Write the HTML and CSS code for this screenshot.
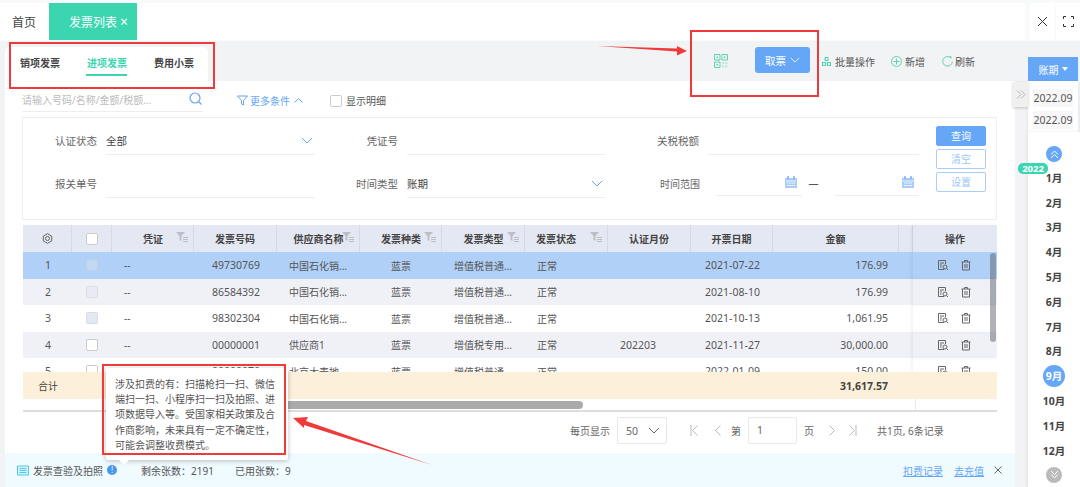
FILE: index.html
```html
<!DOCTYPE html>
<html lang="en">
<head>
    <meta charset="UTF-8">
    <title>发票列表</title>
    <link rel="stylesheet" href="styles.css">
</head>
<body>
<svg class="defs" width="0" height="0">
    <symbol id="i-filter" viewBox="0 0 12 10"><path d="M0 0h9L5.500 4v5L3.500 8V4z" fill="#bdbfc5"/><path d="M7 5.500h5M7 7.500h5M7 9.500h5" stroke="#bdbfc5" fill="none"/></symbol>
    <symbol id="i-doc" viewBox="0 0 12 12"><path d="M7 10.500H1.500v-9h7V5M3 4h4M3 6h2M3 8h1.500" fill="none" stroke="#666"/><circle cx="8" cy="8" r="2" fill="none" stroke="#666"/><path d="M9.500 9.500l1.500 1.500" stroke="#666"/></symbol>
    <symbol id="i-trash" viewBox="0 0 12 12"><path d="M1.500 3h9M4.500 3V1.500h3V3M2.500 3v8h7V3M5 5v4M7 5v4" fill="none" stroke="#666"/></symbol>
    <symbol id="i-cal" viewBox="0 0 12 12"><path d="M0 2h12v10H0z" fill="#a9cdf8"/><path d="M3 0v3M9 0v3" stroke="#66a6f7" stroke-width="1.300"/><path d="M1 5h10M2 7h8M2 9.500h8" stroke="#fff" stroke-dasharray="1.500 .7"/></symbol>
    <symbol id="i-down" viewBox="0 0 12 7"><path d="M1 1l5 5 5-5" fill="none" stroke="currentColor"/></symbol>
</svg>

<div class="topbar">
    <div class="tabs">
        <span class="tab">首页</span>
        <span class="tab tab-on">发票列表<i>×</i></span>
    </div>
    <div class="win-btns">
        <span class="win-btn"><svg width="11" height="11" viewBox="0 0 11 11"><path d="M1 1l9 9M10 1l-9 9" stroke="#333" fill="none"/></svg></span>
        <span class="win-btn"><svg width="11" height="11" viewBox="0 0 11 11"><path d="M.5 3V.5H3M8 .5h2.500V3M10.500 8v2.500H8M3 10.500H.5V8" stroke="#333" fill="none"/></svg></span>
    </div>
</div>

<div class="content">
    <div class="main">
        <div class="toolbar">
            <div class="kind-tabs">
                <span class="kind">销项发票</span>
                <span class="kind kind-on">进项发票</span>
                <span class="kind">费用小票</span>
            </div>
            <div class="actions">
                <svg class="qr" width="14" height="14" viewBox="0 0 14 14"><path d="M.5.500h5.500v5.500H.5zM8 .5h5.500v5.500H8zM.5 8h5.500v5.500H.5z" fill="none" stroke="#5fd3ae"/><path d="M2.500 2.500h1.500V4H2.500zM10 2.500h1.500V4H10zM2.500 10h1.500v1.500H2.500z" fill="#5fd3ae"/><path d="M8 8h2v2H8zM11 8h2.500v2H11zM8 11h2v2.500H8zM11 11h2.500v2.500H11z" fill="#bfe9da"/></svg>
                <span class="btn-take">取票<svg width="10" height="6" viewBox="0 0 12 7"><use href="#i-down"/></svg></span>
                <span class="act act-batch"><svg width="9" height="9" viewBox="0 0 9 9"><path d="M3 .5h3v3H3zM.5 5.500h3v3h-3zM5.500 5.500h3v3h-3z" fill="none" stroke="#3ecfa9"/></svg>批量操作</span>
                <span class="act act-add"><svg width="11" height="11" viewBox="0 0 11 11"><circle cx="5.500" cy="5.500" r="5" fill="none" stroke="#5fd3ae"/><path d="M5.500 2.500v6M2.500 5.500h6" stroke="#5fd3ae"/></svg>新增</span>
                <span class="act act-fresh"><svg width="11" height="11" viewBox="0 0 11 11"><path d="M8.500 1.600A4.800 4.800 0 1 0 10.300 5.500" fill="none" stroke="#5fd3ae"/><path d="M7 .5l2.500 2.500-.3-3z" fill="#5fd3ae"/></svg>刷新</span>
            </div>
        </div>

        <div class="panel">
            <div class="search-row">
                <div class="search">
                    <span>请输入号码/名称/金额/税额...</span>
                    <svg width="14" height="14" viewBox="0 0 14 14"><circle cx="6" cy="6" r="5" fill="none" stroke="#66a6f7" stroke-width="1.200"/><path d="M9.500 9.500l3 3" stroke="#66a6f7" stroke-width="1.200"/></svg>
                </div>
                <span class="more"><svg width="11" height="11" viewBox="0 0 11 11"><path d="M.5 1h10L6.500 5.500V10l-2-1V5.500z" fill="none" stroke="#66a6f7"/></svg>更多条件<svg class="more-up" width="9" height="5" viewBox="0 0 9 5"><path d="M.5 4.500l4-4 4 4" fill="none" stroke="#66a6f7"/></svg></span>
                <span class="detail"><i class="check"></i>显示明细</span>
            </div>

            <div class="filter">
                <div class="fields">
                    <label>认证状态</label>
                    <div class="field">全部<svg class="chev" width="12" height="7" viewBox="0 0 12 7"><use href="#i-down"/></svg></div>
                    <label>凭证号</label>
                    <div class="field"></div>
                    <label>关税税额</label>
                    <div class="field"></div>
                    <label>报关单号</label>
                    <div class="field"></div>
                    <label>时间类型</label>
                    <div class="field">账期<svg class="chev" width="12" height="7" viewBox="0 0 12 7"><use href="#i-down"/></svg></div>
                    <label class="label-small">时间范围</label>
                    <div class="dates">
                        <div class="date"><svg width="12" height="12"><use href="#i-cal"/></svg></div>
                        <span class="dash">—</span>
                        <div class="date"><svg width="12" height="12"><use href="#i-cal"/></svg></div>
                    </div>
                </div>
                <div class="filter-btns">
                    <span class="fbtn fbtn-on">查询</span>
                    <span class="fbtn">清空</span>
                    <span class="fbtn">设置</span>
                </div>
            </div>

            <div class="table">
                <div class="row head">
                    <span><svg width="11" height="11" viewBox="0 0 11 11"><path d="M5.500.7l4.200 2.400v4.800L5.500 10.300 1.300 7.900V3.100z" fill="none" stroke="#666"/><circle cx="5.500" cy="5.500" r="2" fill="none" stroke="#666"/></svg></span>
                    <span><i class="check"></i></span>
                    <span class="has-f">凭证<svg class="f" width="12" height="10"><use href="#i-filter"/></svg></span>
                    <span>发票号码</span>
                    <span class="has-f">供应商名称<svg class="f" width="12" height="10"><use href="#i-filter"/></svg></span>
                    <span class="has-f">发票种类<svg class="f" width="12" height="10"><use href="#i-filter"/></svg></span>
                    <span class="has-f">发票类型<svg class="f" width="12" height="10"><use href="#i-filter"/></svg></span>
                    <span class="has-f st">发票状态<svg class="f" width="12" height="10"><use href="#i-filter"/></svg></span>
                    <span>认证月份</span>
                    <span>开票日期</span>
                    <span>金额</span>
                    <span></span>
                    <span class="op">操作</span>
                </div>
                <div class="tbody">
                    <div class="row sel">
                        <span class="num">1</span><span><i class="check c1"></i></span><span class="l">--</span><span class="num">49730769</span><span class="l">中国石化销...</span><span>蓝票</span><span class="l">增值税普通...</span><span class="l">正常</span><span class="num"></span><span class="num">2021-07-22</span><span class="r num">176.99</span><span></span>
                        <span class="op"><svg width="12" height="12"><use href="#i-doc"/></svg><svg width="12" height="12"><use href="#i-trash"/></svg></span>
                    </div>
                    <div class="row alt">
                        <span class="num">2</span><span><i class="check c2"></i></span><span class="l">--</span><span class="num">86584392</span><span class="l">中国石化销...</span><span>蓝票</span><span class="l">增值税普通...</span><span class="l">正常</span><span class="num"></span><span class="num">2021-08-10</span><span class="r num">176.99</span><span></span>
                        <span class="op"><svg width="12" height="12"><use href="#i-doc"/></svg><svg width="12" height="12"><use href="#i-trash"/></svg></span>
                    </div>
                    <div class="row">
                        <span class="num">3</span><span><i class="check c3"></i></span><span class="l">--</span><span class="num">98302304</span><span class="l">中国石化销...</span><span>蓝票</span><span class="l">增值税普通...</span><span class="l">正常</span><span class="num"></span><span class="num">2021-10-13</span><span class="r num">1,061.95</span><span></span>
                        <span class="op"><svg width="12" height="12"><use href="#i-doc"/></svg><svg width="12" height="12"><use href="#i-trash"/></svg></span>
                    </div>
                    <div class="row alt">
                        <span class="num">4</span><span><i class="check"></i></span><span class="l">--</span><span class="num">00000001</span><span class="l">供应商1</span><span>蓝票</span><span class="l">增值税专用...</span><span class="l">正常</span><span class="l num">202203</span><span class="num">2021-11-27</span><span class="r num">30,000.00</span><span></span>
                        <span class="op"><svg width="12" height="12"><use href="#i-doc"/></svg><svg width="12" height="12"><use href="#i-trash"/></svg></span>
                    </div>
                    <div class="row">
                        <span class="num">5</span><span><i class="check"></i></span><span class="l">--</span><span class="num">00000070</span><span class="l">北京大麦地</span><span>蓝票</span><span class="l">增值税普通...</span><span class="l">正常</span><span class="num"></span><span class="num">2022-01-09</span><span class="r num">150.00</span><span></span>
                        <span class="op"><svg width="12" height="12"><use href="#i-doc"/></svg><svg width="12" height="12"><use href="#i-trash"/></svg></span>
                    </div>
                    <div class="vbar"></div>
                </div>
                <div class="row total">
                    <span class="total-name">合计</span>
                    <span class="total-sum">31,617.57</span>
                </div>
                <div class="hscroll"><div class="hbar"></div></div>
            </div>

            <div class="pager">
                <span>每页显示</span>
                <span class="page-size">50<svg width="12" height="7" viewBox="0 0 12 7"><use href="#i-down"/></svg></span>
                <div class="page-nav">
                    <svg width="8" height="11" viewBox="0 0 8 11"><path d="M1 0v11M7.500.5l-5 5 5 5" fill="none" stroke="#bbb"/></svg>
                    <svg width="7" height="11" viewBox="0 0 7 11"><path d="M6.500.5l-5 5 5 5" fill="none" stroke="#bbb"/></svg>
                    <span>第</span>
                    <span class="page-no">1</span>
                    <span>页</span>
                    <svg width="7" height="11" viewBox="0 0 7 11"><path d="M.5.500l5 5-5 5" fill="none" stroke="#bbb"/></svg>
                    <svg width="8" height="11" viewBox="0 0 8 11"><path d="M7 0v11M.5.500l5 5-5 5" fill="none" stroke="#bbb"/></svg>
                </div>
                <span class="page-total">共1页, 6条记录</span>
            </div>

            <div class="notice">
                <svg class="scan" width="12" height="11" viewBox="0 0 12 11"><path d="M.5 1h11v9H.5z" fill="#d6f2fb" stroke="#4fc8ea"/><path d="M2.500 3.500h7M2.500 5.500h7M2.500 7.500h7" stroke="#4fc8ea"/></svg>
                <span>发票查验及拍照</span>
                <i class="info">!</i>
                <span class="left-count">剩余张数：2191</span>
                <span class="used-count">已用张数：9</span>
                <a class="link link-a" href="#">扣费记录</a>
                <a class="link" href="#">去充值</a>
                <svg class="notice-x" width="8" height="8" viewBox="0 0 8 8"><path d="M.5.500l7 7M7.500.5l-7 7" stroke="#666" fill="none"/></svg>
            </div>
        </div>
    </div>

    <div class="side">
        <div class="period">账期<b></b></div>
        <div class="period-list">
            <span>2022.09</span>
            <span>2022.09</span>
        </div>
        <div class="months">
            <span class="round round-up"><svg width="9" height="9" viewBox="0 0 9 9"><path d="M1 4.500l3.500-3.500 3.500 3.500M1 8l3.500-3.500 3.500 3.500" fill="none" stroke="#fff"/></svg></span>
            <span class="month">1月</span>
            <span class="month">2月</span>
            <span class="month">3月</span>
            <span class="month">4月</span>
            <span class="month">5月</span>
            <span class="month">6月</span>
            <span class="month">7月</span>
            <span class="month">8月</span>
            <span class="month month-on"><em>9月</em></span>
            <span class="month">10月</span>
            <span class="month">11月</span>
            <span class="month">12月</span>
            <span class="round round-down"><svg width="9" height="9" viewBox="0 0 9 9"><path d="M1 1l3.500 3.500L8 1M1 4.500L4.500 8 8 4.500" fill="none" stroke="#fff"/></svg></span>
        </div>
    </div>
</div>

<!-- things lying over the page -->
<span class="handle"><svg width="10" height="9" viewBox="0 0 10 9"><path d="M1 .5l4 4-4 4M5 .5l4 4-4 4" fill="none" stroke="#b5b5b5"/></svg></span>
<span class="year">2022</span>

<div class="tip">
    涉及扣费的有：扫描枪扫一扫、微信<br>
    端扫一扫、小程序扫一扫及拍照、进<br>
    项数据导入等。受国家相关政策及合<br>
    作商影响，未来具有一定不确定性，<br>
    可能会调整收费模式。
</div>

<svg class="marks" width="1080" height="487" viewBox="0 0 1080 487">
    <g fill="none" stroke="#f03a3a" stroke-width="2">
        <rect x="10" y="43" width="204" height="45"/>
        <rect x="691" y="31" width="127" height="65"/>
        <rect x="103" y="365" width="182" height="89"/>
    </g>
    <g fill="#f03a3a">
        <polygon points="597,46 677,48.500 677,46 687,51 677,55.500 677,51.500"/>
        <polygon points="293,418 308,417 306,421 432,465 304,425 304,428"/>
    </g>
</svg>
</body>
</html>
```

FILE: styles.css
```css
*{ margin: 0; padding: 0; box-sizing: border-box; }
i,em{ font-style: normal; }
a{ color: inherit; }
body{
    position: relative;
    width: 1080px;
    height: 487px;
    overflow: hidden;
    background: #f2f3f5;
    font-family: "Noto Sans", "Noto Sans CJK SC", sans-serif;
    font-size: 10px;
    color: #555;
}
.defs{ position: absolute; }

/* top tabs */
.topbar{
    display: flex;
    justify-content: space-between;
    height: 41px;
    padding-top: 3px;
    background: #f9fafc;
}
.tabs{
    display: flex;
    flex: 1;
    height: 37px;
    background: #fff;
}
.tab{
    display: flex;
    align-items: center;
    padding-left: 12px;
    width: 49px;
    font-size: 12px;
    color: #444;
}
.tab-on{
    width: 88px;
    padding-left: 20px;
    background: #3bd6b0;
    color: #fff;
}
.tab-on i{ margin-left: 3px; font-size: 14px; }
.win-btns{ display: flex; height: 37px; margin-left: 3px; }
.win-btn{
    display: flex;
    align-items: center;
    justify-content: center;
    width: 24px;
    margin-left: 2px;
    background: #fff;
}

.content{ display: flex; height: 446px; }
.main{ display: flex; flex-direction: column; width: 1010px; margin-left: 5px; }

/* toolbar */
.toolbar{
    display: flex;
    justify-content: space-between;
    height: 40px;
    padding-right: 40px;
}
.kind-tabs{
    display: flex;
    width: 203px;
    height: 34px;
    margin-top: 6px;
    padding-left: 15px;
    background: #fff;
    border-radius: 5px 5px 0 0;
}
.kind{
    position: relative;
    flex: none;
    width: 67px;
    line-height: 32px;
    font-weight: bold;
    color: #444;
}
.kind-on{ color: #3bd6b0; }
.kind-on:after{
    content: "";
    position: absolute;
    left: -1px;
    top: 27px;
    width: 41px;
    height: 2px;
    background: #3bd6b0;
}
.actions{ display: flex; align-items: center; }
.btn-take{
    display: flex;
    align-items: center;
    justify-content: center;
    gap: 4px;
    width: 55px;
    height: 26px;
    margin: 0 12px 2px 27px;
    background: #66a6f7;
    border-radius: 3px;
    font-size: 10.500px;
    color: #fff;
}
.act{ display: flex; align-items: center; gap: 4px; }
.act-batch{ margin-right: 16px; }
.act-add{ margin-right: 17px; gap: 3px; }
.act-fresh{ gap: 2px; }

/* panel */
.panel{
    display: flex;
    flex-direction: column;
    flex: 1;
    padding: 9px 18px 0 17px;
    background: #fff;
}
.search-row{ display: flex; align-items: center; height: 21px; }
.search{
    display: flex;
    justify-content: space-between;
    align-items: center;
    width: 181px;
    height: 22px;
    padding-bottom: 2px;
    border-bottom: 1px solid #eee;
    color: #bbb;
}
.more{
    display: flex;
    align-items: center;
    gap: 2px;
    margin-left: 34px;
    color: #66a6f7;
}
.more-up{ margin-left: 2px; }
.detail{ display: flex; align-items: center; gap: 4px; margin-left: 27px; }
.check{
    display: block;
    width: 12px;
    height: 12px;
    border: 1px solid #ccc;
    border-radius: 2px;
    background: #fff;
}
.c1{ background: #c4d8f4; border-color: #bcd0ea; }
.c2{ background: #e8ebf3; border-color: #dcdfe8; }
.c3{ background: #e4e8f3; border-color: #d8dce8; }

/* filter box */
.filter{
    display: flex;
    height: 103px;
    margin-top: 6px;
    border: 1px solid #eee;
}
.fields{
    display: grid;
    grid-template-columns: 83px 209px 92px 198px 103px 211px;
    grid-template-rows: 26px 26px;
    row-gap: 17px;
    padding-top: 11px;
}
.fields label{
    padding-right: 9px;
    font-size: 10.500px;
    line-height: 25px;
    text-align: right;
    color: #666;
}
.fields .label-small{ font-size: 10px; padding-right: 8px; }
.field{
    display: flex;
    justify-content: space-between;
    line-height: 25px;
    font-size: 10.500px;
    color: #444;
    border-bottom: 1px solid #eee;
}
.chev{ margin: 8px 2px 0 0; color: #66a6f7; }
.dates{ display: flex; padding-left: 9px; }
.date{
    display: flex;
    justify-content: flex-end;
    flex: 1;
    height: 24px;
    padding: 4px 5px 0 0;
    border-bottom: 1px solid #eee;
}
.dash{ width: 33px; padding-left: 7px; line-height: 22px; }
.filter-btns{
    display: flex;
    flex-direction: column;
    gap: 3px;
    width: 50px;
    margin: 8px 0 0 17px;
}
.fbtn{
    height: 20px;
    border: 1px solid #a9cdf8;
    border-radius: 2px;
    line-height: 18px;
    text-align: center;
    color: #a0c6f8;
}
.fbtn-on{ background: #66a6f7; border-color: #66a6f7; color: #fff; }

/* table */
.table{ margin: 5px 0 0 1px; border-bottom: 2px solid #ddd; }
.row{
    display: grid;
    grid-template-columns: 49px 40px 82px 83px 83px 82px 83px 83px 83px 82px 126px 14px 84px;
    height: 26.500px;
    background: #fff;
}
.row > span{
    display: flex;
    align-items: center;
    justify-content: center;
    position: relative;
    min-width: 0;
    white-space: nowrap;
    overflow: hidden;
}
.head{ height: 27px; background: #e4e8f3; font-weight: bold; color: #444; }
.head > span{ border-right: 1px solid #d5d9e4; }
.head .has-f{ padding-left: 1px; }
.has-f .f{ position: absolute; right: 5px; top: 7px; }
.head .st{ justify-content: flex-start; padding-left: 11px; }
.tbody{ position: relative; height: 120px; overflow: hidden; }
.sel{ background: #b0d0f8; }
.alt{ background: #f0f1f7; }
.row .l{ justify-content: flex-start; padding-left: 12px; }
.row .r{ justify-content: flex-end; padding-right: 11px; }
.num{ font-size: 10.500px; padding-left: 1px; }
.row .op{ gap: 11px; padding-right: 2px; box-shadow: -2px 0 3px rgba(0,0,0,.05); }
.head .op{ border: 0; padding: 0; }
.vbar{
    position: absolute;
    right: 1px;
    top: 1px;
    width: 6px;
    height: 89px;
    border-radius: 3px;
    background: rgba(80,85,95,.45);
}
.total{
    display: flex;
    align-items: center;
    justify-content: space-between;
    height: 27px;
    padding: 0 109px 0 15px;
    background: #fcf0da;
    color: #444;
}
.total-sum{ font-size: 10.500px; font-weight: bold; }
.hscroll{ position: relative; height: 11px; padding-top: 2px; background: #fff; }
.hscroll:after{
    content: "";
    position: absolute;
    left: 892px;
    top: 0;
    width: 1px;
    height: 11px;
    background: #e8e8e8;
}
.hbar{
    width: 473px;
    height: 8px;
    margin-left: 87px;
    border-radius: 4px;
    background: #aaa;
}

/* pager */
.pager{
    display: flex;
    align-items: center;
    height: 37px;
    padding-left: 548px;
    color: #666;
}
.page-size{
    display: flex;
    align-items: center;
    justify-content: space-between;
    width: 50px;
    height: 27px;
    margin-left: 7px;
    padding: 0 6px 0 8px;
    border: 1px solid #e8e8e8;
    border-radius: 2px;
    font-size: 10.500px;
}
.page-nav{ display: flex; align-items: center; margin-left: 23px; }
.page-nav span:nth-child(3){ margin: 0 7px 0 10px; }
.page-nav svg:nth-child(2){ margin-left: 16px; }
.page-nav span:nth-child(5){ margin: 0 15px 0 7px; }
.page-nav svg:last-child{ margin-left: 13px; }
.page-no{
    width: 49px;
    height: 27px;
    padding-left: 8px;
    border: 1px solid #e8e8e8;
    border-radius: 2px;
    font-size: 10.500px;
    line-height: 25px;
}
.page-total{ margin-left: 20px; }

/* bottom notice */
.notice{
    display: flex;
    align-items: center;
    height: 34px;
    margin: 4px -18px 0 -17px;
    padding: 0 13px 0 12px;
    background: #f0fbff;
}
.scan{ margin-right: 4px; }
.info{
    width: 10px;
    height: 10px;
    margin-left: 4px;
    border-radius: 50%;
    background: #4a96f0;
    font-size: 8px;
    line-height: 10px;
    text-align: center;
    color: #fff;
}
.left-count{ margin-left: 24px; }
.used-count{ margin-left: 21px; }
.link{ color: #66a6f7; text-decoration: underline; }
.link-a{ margin: 0 11px 0 auto; }
.notice-x{ margin-left: 10px; }

/* right column */
.side{ display: flex; flex-direction: column; flex: 1; padding: 16px 0 0 13px; }
.period{
    display: flex;
    align-items: center;
    justify-content: center;
    gap: 3px;
    width: 50px;
    height: 24px;
    background: #66a6f7;
    font-size: 10px;
    color: #fff;
}
.period b{
    border-top: 4px solid #fff;
    border-left: 3px solid transparent;
    border-right: 3px solid transparent;
}
.period-list{
    display: flex;
    flex-direction: column;
    gap: 4px;
    width: 50px;
    height: 51px;
    padding: 8px 5px 0;
    background: #fff;
    box-shadow: 0 1px 3px rgba(0,0,0,.1);
}
.period-list span{
    height: 18px;
    background: #f7f7f7;
    font-size: 10.500px;
    line-height: 18px;
    text-align: center;
    color: #555;
}
.months{
    display: flex;
    flex-direction: column;
    align-items: center;
    flex: 1;
    padding-top: 14px;
    background: #fff;
    box-shadow: -1px 0 3px rgba(0,0,0,.08);
}
.round{
    display: flex;
    align-items: center;
    justify-content: center;
    flex: none;
    width: 16px;
    height: 16px;
    border-radius: 50%;
    background: #66a6f7;
}
.round-up{ margin-bottom: 3px; }
.round-down{ margin-top: 4px; background: #bbb; }
.month{
    display: flex;
    align-items: center;
    justify-content: center;
    flex: none;
    height: 24.800px;
    font-size: 10.500px;
    font-weight: bold;
    color: #444;
}
.month-on em{
    display: block;
    width: 22px;
    height: 22px;
    border-radius: 50%;
    background: #66a6f7;
    line-height: 22px;
    text-align: center;
    color: #fff;
}

/* overlays */
.handle{
    position: absolute;
    left: 1013px;
    top: 82px;
    display: flex;
    align-items: center;
    justify-content: center;
    width: 15px;
    height: 25px;
    background: #f0f0f0;
    box-shadow: 0 1px 3px rgba(0,0,0,.2);
}
.year{
    position: absolute;
    left: 1018px;
    top: 163px;
    width: 30px;
    height: 11px;
    border-radius: 5px;
    background: #3bd6b0;
    font-size: 9.500px;
    font-weight: bold;
    line-height: 11px;
    text-align: center;
    color: #fff;
}
.tip{
    position: absolute;
    left: 106px;
    top: 368px;
    width: 182px;
    height: 92px;
    padding: 9px 0 0 9px;
    background: #fff;
    border-radius: 2px;
    box-shadow: 0 1px 5px rgba(0,0,0,.25);
    line-height: 15.200px;
    white-space: nowrap;
    color: #555;
}
.tip:after{
    content: "";
    position: absolute;
    left: 13px;
    top: 92px;
    border-top: 5px solid #fff;
    border-left: 5px solid transparent;
    border-right: 5px solid transparent;
}
.marks{ position: absolute; left: 0; top: 0; pointer-events: none; }
```
